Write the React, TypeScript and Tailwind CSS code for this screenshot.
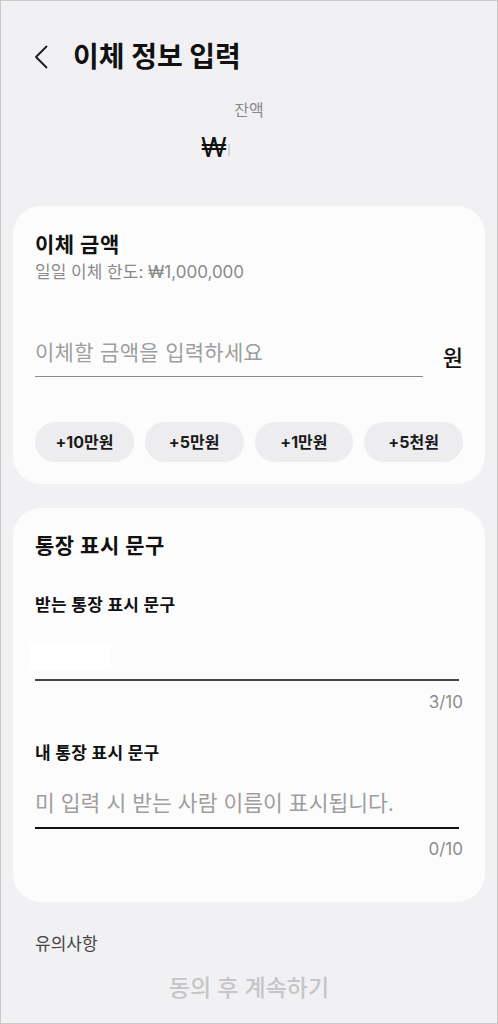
import { type ReactNode } from 'react';

const font = { fontFamily: 'Inter, "Noto Sans CJK KR", "Noto Sans", sans-serif' };

function Card({ children, className }: { children: ReactNode; className?: string }) {
  return <section className={`mx-3 rounded-[28px] bg-[#fcfcfd] px-[22px] ${className ?? ''}`}>{children}</section>;
}

function Chip({ label }: { label: string }) {
  return (
    <button className="h-10 rounded-full bg-[#ededef] text-[16px] font-bold text-[#1a1a1a]">
      {label}
    </button>
  );
}

export default function App() {
  const chips = ['+10만원', '+5만원', '+1만원', '+5천원'];

  return (
    <div style={font} className="box-border flex h-[1024px] w-[498px] flex-col overflow-hidden border border-[#c9c9c9] bg-[#f1f1f3]">
      {/* header */}
      <header className="flex items-center pt-[39px] pl-[33px]">
        <svg width="14" height="24" viewBox="0 0 14 24" fill="none" className="mr-[25px]">
          <path d="M12.5 1.5 2 12l10.5 10.5" stroke="#1a1a1a" strokeWidth="1.8" strokeLinecap="round" strokeLinejoin="round" />
        </svg>
        <h1 className="text-[28px] font-bold leading-[34px] text-[#111]">이체 정보 입력</h1>
      </header>

      {/* balance */}
      <div className="mt-[26px] text-center text-[16px] leading-5 text-[#8a8a8a]">잔액</div>
      <div className="mt-3 flex h-8 items-center pl-[200px]">
        <span className="text-[27px] font-normal leading-8 text-[#111]">₩</span>
        <div className="ml-px mt-1 h-[12px] w-[2px] bg-[#d4d4d6]" />
      </div>

      {/* amount card */}
      <Card className="mt-[42px] pt-[26px] pb-[22px]">
        <h2 className="text-[21px] font-bold leading-[26px] tracking-[0.5px] text-[#111]">이체 금액</h2>
        <p className="mt-[3px] text-[17px] leading-[22px] text-[#8a8a8a]">일일 이체 한도: ₩1,000,000</p>

        <div className="mt-[56px] flex items-center">
          <div className="w-[388px] border-b-[1.5px] border-[#8a8a8a] pb-[9px]">
            <input
              placeholder="이체할 금액을 입력하세요"
              className="w-full bg-transparent text-[21px] leading-7 tracking-[0.3px] text-[#111] outline-none placeholder:text-[#9e9e9e]"
            />
          </div>
          <span className="ml-5 text-[22px] font-medium leading-7 text-[#111]">원</span>
        </div>

        <div className="mt-[45px] grid grid-cols-4 gap-[11px]">
          {chips.map((c) => (
            <Chip key={c} label={c} />
          ))}
        </div>
      </Card>

      {/* memo card */}
      <Card className="mt-6 pt-6 pb-[41px]">
        <h2 className="text-[21px] font-bold leading-7 tracking-[0.5px] text-[#111]">통장 표시 문구</h2>

        <h3 className="mt-[34px] text-[17px] font-bold leading-[22px] tracking-[0.3px] text-[#111]">받는 통장 표시 문구</h3>
        <div className="mr-1 mt-[27px] border-b-2 border-[#454545]">
          <div className="-ml-[6px] h-[27px] w-[82px] bg-white" />
          <div className="h-[9px]" />
        </div>
        <div className="mt-[9px] text-right text-[17px] leading-6 text-[#8c8c8c]">3/10</div>

        <h3 className="mt-[28px] text-[17px] font-bold leading-[22px] tracking-[0.3px] text-[#111]">내 통장 표시 문구</h3>
        <div className="mr-1 mt-[25px] border-b-2 border-[#111] pb-[10px]">
          <input
            placeholder="미 입력 시 받는 사람 이름이 표시됩니다."
            className="w-full bg-transparent text-[21.5px] leading-7 text-[#111] outline-none placeholder:text-[#9e9e9e]"
          />
        </div>
        <div className="mt-2 text-right text-[17px] leading-6 text-[#8c8c8c]">0/10</div>
      </Card>

      {/* notice */}
      <div className="mt-[31px] pl-[34px] text-[17px] leading-[22px] text-[#444]">유의사항</div>
      <button className="mt-[18px] text-center text-[23px] font-medium leading-[30px] text-[#c6c6c8]">동의 후 계속하기</button>
    </div>
  );
}
